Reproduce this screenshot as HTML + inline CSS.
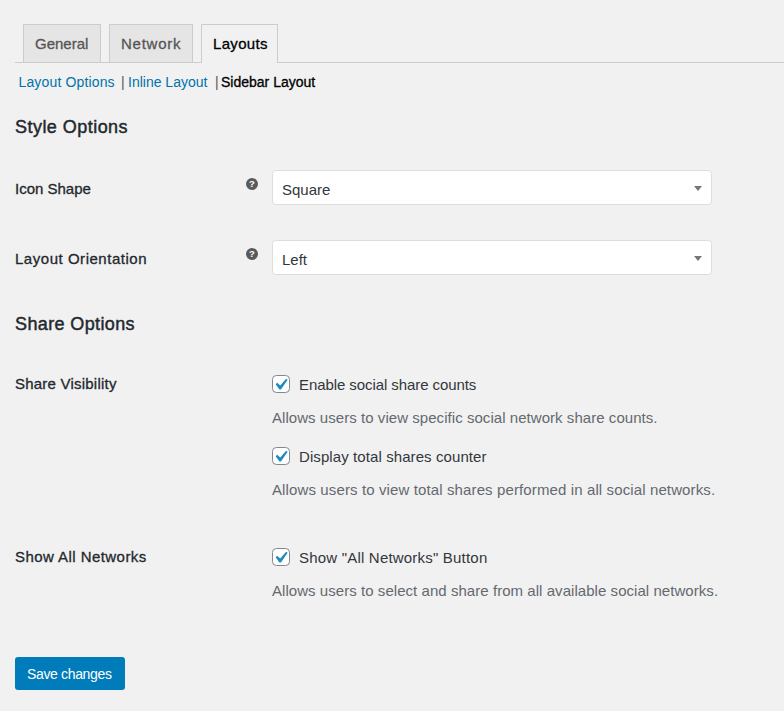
<!DOCTYPE html>
<html><head><meta charset="utf-8"><style>
html,body{margin:0;padding:0;width:784px;height:711px;overflow:hidden;background:#f1f1f1;}
body{position:relative;font-family:"Liberation Sans",sans-serif;}
.t{position:absolute;white-space:nowrap;}
.wrapline{position:absolute;left:15px;right:0;top:62px;height:1px;background:#ccc;}
.tab{position:absolute;top:24px;height:38px;border:1px solid #ccc;border-bottom:none;background:#e5e5e5;box-sizing:border-box;}
.tab.act{background:#f1f1f1;height:39px;}
.sel{position:absolute;left:272px;width:440px;height:35px;box-sizing:border-box;border:1px solid #ddd;border-radius:3.5px;background:#fff;}
.arr,.ck,.hi{position:absolute;}
.cb{position:absolute;width:17.6px;height:17.6px;box-sizing:border-box;border:1.1px solid #7e8993;border-radius:4.4px;background:#fff;}
.btn{position:absolute;left:15px;top:657px;width:110px;height:33px;background:#007cba;border-radius:3px;}
</style></head><body>
<div class="wrapline"></div><div class="tab" style="left:23px;width:78px"></div><div class="tab" style="left:109px;width:84px"></div><div class="tab act" style="left:201px;width:77px"></div><div class="t" style="left:35px;top:34.75px;font-size:15px;line-height:17px;font-weight:normal;color:#555;letter-spacing:0px;-webkit-text-stroke:0.3px #555;">General</div>
<div class="t" style="left:121px;top:35px;font-size:15px;line-height:17px;font-weight:normal;color:#555;letter-spacing:0.75px;-webkit-text-stroke:0.3px #555;">Network</div>
<div class="t" style="left:213px;top:35px;font-size:15px;line-height:17px;font-weight:normal;color:#000;letter-spacing:0.33px;-webkit-text-stroke:0.3px #000;">Layouts</div>
<div class="t" style="left:18.5px;top:74px;font-size:14px;line-height:16px;font-weight:normal;color:#0073aa;letter-spacing:0.15px;">Layout Options</div>
<div class="t" style="left:121px;top:74px;font-size:14px;line-height:16px;font-weight:normal;color:#555;letter-spacing:0px;">|</div>
<div class="t" style="left:128px;top:74px;font-size:14px;line-height:16px;font-weight:normal;color:#0073aa;letter-spacing:0px;">Inline Layout</div>
<div class="t" style="left:215px;top:74px;font-size:14px;line-height:16px;font-weight:normal;color:#555;letter-spacing:0px;">|</div>
<div class="t" style="left:221px;top:74px;font-size:14px;line-height:16px;font-weight:normal;color:#000;letter-spacing:0px;-webkit-text-stroke:0.3px #000;">Sidebar Layout</div>
<div class="t" style="left:15px;top:116.5px;font-size:18px;line-height:20px;font-weight:normal;color:#23282d;letter-spacing:0.46px;-webkit-text-stroke:0.45px #23282d;">Style Options</div>
<div class="t" style="left:15px;top:180px;font-size:15px;line-height:17px;font-weight:normal;color:#23282d;letter-spacing:0px;-webkit-text-stroke:0.3px #23282d;">Icon Shape</div>
<svg class="hi" style="left:246.3px;top:177.6px" width="12" height="12" viewBox="0 0 12 12"><circle cx="6" cy="6" r="6" fill="#5a5a5a"/><text x="6" y="9.4" text-anchor="middle" font-family="Liberation Sans" font-weight="bold" font-size="9.5" fill="#fff">?</text></svg>
<div class="sel" style="top:170px"></div><svg class="arr" style="left:694px;top:186px" width="8" height="5" viewBox="0 0 8 5"><path d="M0 0H8L4 5z" fill="#777"/></svg>
<div class="t" style="left:282px;top:180.8px;font-size:15px;line-height:17px;font-weight:normal;color:#32373c;letter-spacing:0px;">Square</div>
<div class="t" style="left:15px;top:250px;font-size:15px;line-height:17px;font-weight:normal;color:#23282d;letter-spacing:0.53px;-webkit-text-stroke:0.3px #23282d;">Layout Orientation</div>
<svg class="hi" style="left:246.3px;top:247.5px" width="12" height="12" viewBox="0 0 12 12"><circle cx="6" cy="6" r="6" fill="#5a5a5a"/><text x="6" y="9.4" text-anchor="middle" font-family="Liberation Sans" font-weight="bold" font-size="9.5" fill="#fff">?</text></svg>
<div class="sel" style="top:240px"></div><svg class="arr" style="left:694px;top:256px" width="8" height="5" viewBox="0 0 8 5"><path d="M0 0H8L4 5z" fill="#777"/></svg>
<div class="t" style="left:282px;top:250.8px;font-size:15px;line-height:17px;font-weight:normal;color:#32373c;letter-spacing:0px;">Left</div>
<div class="t" style="left:15px;top:313.6px;font-size:18px;line-height:20px;font-weight:normal;color:#23282d;letter-spacing:0.375px;-webkit-text-stroke:0.45px #23282d;">Share Options</div>
<div class="t" style="left:15px;top:374.5px;font-size:15px;line-height:17px;font-weight:normal;color:#23282d;letter-spacing:0.22px;-webkit-text-stroke:0.3px #23282d;">Share Visibility</div>
<div class="cb" style="left:272px;top:375px"></div><svg class="ck" style="left:268.70000000000005px;top:372.8px" viewBox="0 0 20 20" width="23.1" height="23.1"><path d="M14.83 4.89l1.34.94-5.81 8.38H9.02L5.78 9.67l1.34-1.25 2.57 2.4z" fill="#1e8cbe"/></svg>
<div class="t" style="left:299px;top:376px;font-size:15px;line-height:17px;font-weight:normal;color:#32373c;letter-spacing:-0.08px;">Enable social share counts</div>
<div class="t" style="left:272px;top:408.7px;font-size:15px;line-height:17px;font-weight:normal;color:#646970;letter-spacing:0.05px;">Allows users to view specific social network share counts.</div>
<div class="cb" style="left:272px;top:447px"></div><svg class="ck" style="left:268.70000000000005px;top:444.8px" viewBox="0 0 20 20" width="23.1" height="23.1"><path d="M14.83 4.89l1.34.94-5.81 8.38H9.02L5.78 9.67l1.34-1.25 2.57 2.4z" fill="#1e8cbe"/></svg>
<div class="t" style="left:299px;top:448px;font-size:15px;line-height:17px;font-weight:normal;color:#32373c;letter-spacing:0.09px;">Display total shares counter</div>
<div class="t" style="left:272px;top:480.6px;font-size:15px;line-height:17px;font-weight:normal;color:#646970;letter-spacing:0.12px;">Allows users to view total shares performed in all social networks.</div>
<div class="t" style="left:15px;top:548px;font-size:15px;line-height:17px;font-weight:normal;color:#23282d;letter-spacing:0.44px;-webkit-text-stroke:0.3px #23282d;">Show All Networks</div>
<div class="cb" style="left:272px;top:548px"></div><svg class="ck" style="left:268.70000000000005px;top:545.8000000000001px" viewBox="0 0 20 20" width="23.1" height="23.1"><path d="M14.83 4.89l1.34.94-5.81 8.38H9.02L5.78 9.67l1.34-1.25 2.57 2.4z" fill="#1e8cbe"/></svg>
<div class="t" style="left:299px;top:549px;font-size:15px;line-height:17px;font-weight:normal;color:#32373c;letter-spacing:0.2px;">Show "All Networks" Button</div>
<div class="t" style="left:272px;top:581.9px;font-size:15px;line-height:17px;font-weight:normal;color:#646970;letter-spacing:0.05px;">Allows users to select and share from all available social networks.</div>
<div class="btn"></div><div class="t" style="left:27px;top:666px;font-size:14px;line-height:16px;font-weight:normal;color:#fff;letter-spacing:-0.35px;">Save changes</div>
</body></html>
